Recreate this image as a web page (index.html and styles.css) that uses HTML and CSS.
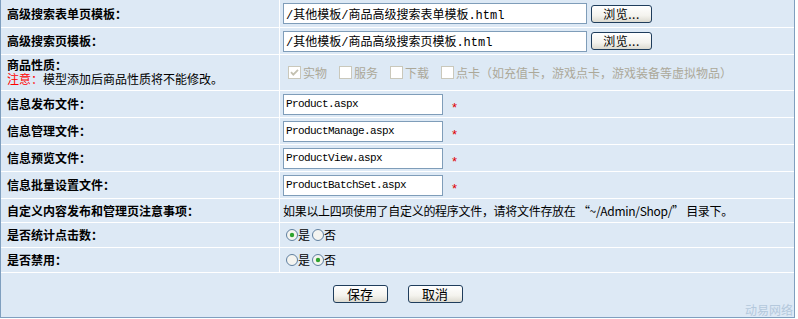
FILE: index.html
```html
<!DOCTYPE html>
<html lang="zh-CN">
<head>
<meta charset="utf-8">
<title>商品模型设置</title>
<link rel="stylesheet" href="styles.css">
</head>
<body>
<div class="panel">
  <div class="label">高级搜索表单页模板：</div>
  <div class="field">
    <input class="txt txt-long" type="text" value="/其他模板/商品高级搜索表单模板.html">
    <button class="btn btn-browse" type="button">浏览...</button>
  </div>

  <div class="label">高级搜索页模板：</div>
  <div class="field">
    <input class="txt txt-long" type="text" value="/其他模板/商品高级搜索页模板.html">
    <button class="btn btn-browse" type="button">浏览...</button>
  </div>

  <div class="label label-stack">
    <span class="line">商品性质：</span>
    <span class="line note"><em>注意：</em>模型添加后商品性质将不能修改。</span>
  </div>
  <div class="field checks">
    <span class="chk">
      <svg class="box" width="13" height="13" viewBox="0 0 13 13"><rect x="0.5" y="0.5" width="12" height="12" fill="#fff" stroke="#cac8bb"/><path d="M3 6.2 L5.3 8.6 L10 3.8" fill="none" stroke="#c3c0b0" stroke-width="1.8"/></svg>
      实物
    </span>
    <span class="chk">
      <svg class="box" width="13" height="13" viewBox="0 0 13 13"><rect x="0.5" y="0.5" width="12" height="12" fill="#fff" stroke="#cac8bb"/></svg>
      服务
    </span>
    <span class="chk">
      <svg class="box" width="13" height="13" viewBox="0 0 13 13"><rect x="0.5" y="0.5" width="12" height="12" fill="#fff" stroke="#cac8bb"/></svg>
      下载
    </span>
    <span class="chk">
      <svg class="box" width="13" height="13" viewBox="0 0 13 13"><rect x="0.5" y="0.5" width="12" height="12" fill="#fff" stroke="#cac8bb"/></svg>
      点卡（如充值卡，游戏点卡，游戏装备等虚拟物品）
    </span>
  </div>

  <div class="label">信息发布文件：</div>
  <div class="field">
    <input class="txt txt-short" type="text" value="Product.aspx">
    <span class="req">*</span>
  </div>

  <div class="label">信息管理文件：</div>
  <div class="field">
    <input class="txt txt-short" type="text" value="ProductManage.aspx">
    <span class="req">*</span>
  </div>

  <div class="label">信息预览文件：</div>
  <div class="field">
    <input class="txt txt-short" type="text" value="ProductView.aspx">
    <span class="req">*</span>
  </div>

  <div class="label">信息批量设置文件：</div>
  <div class="field">
    <input class="txt txt-short" type="text" value="ProductBatchSet.aspx">
    <span class="req">*</span>
  </div>

  <div class="label">自定义内容发布和管理页注意事项：</div>
  <div class="field text">如果以上四项使用了自定义的程序文件，请将文件存放在 “~/Admin/Shop/” 目录下。</div>

  <div class="label">是否统计点击数：</div>
  <div class="field radios">
    <span class="rad">
      <svg width="12" height="12" viewBox="0 0 12 12"><circle cx="6" cy="6" r="5.5" fill="#f4f4f0" stroke="#5f7f9f"/><circle cx="6" cy="6" r="2.2" fill="#2ea32e"/></svg>是
    </span>
    <span class="rad">
      <svg width="12" height="12" viewBox="0 0 12 12"><circle cx="6" cy="6" r="5.5" fill="#f4f4f0" stroke="#5f7f9f"/></svg>否
    </span>
  </div>

  <div class="label">是否禁用：</div>
  <div class="field radios">
    <span class="rad">
      <svg width="12" height="12" viewBox="0 0 12 12"><circle cx="6" cy="6" r="5.5" fill="#f4f4f0" stroke="#5f7f9f"/></svg>是
    </span>
    <span class="rad">
      <svg width="12" height="12" viewBox="0 0 12 12"><circle cx="6" cy="6" r="5.5" fill="#f4f4f0" stroke="#5f7f9f"/><circle cx="6" cy="6" r="2.2" fill="#2ea32e"/></svg>否
    </span>
  </div>

  <div class="actions">
    <button class="btn btn-act" type="button">保存</button>
    <button class="btn btn-act" type="button">取消</button>
    <span class="mark">动易网络</span>
  </div>
</div>
</body>
</html>
```

FILE: styles.css
```css
html, body {
  margin: 0;
  padding: 0;
  background: #ffffff;
}

body {
  font-family: "Noto Sans CJK SC", "Liberation Sans", sans-serif;
  font-size: 12px;
  color: #000;
}

.panel {
  width: 793px;
  display: grid;
  grid-template-columns: 278px 1fr;
  grid-template-rows: 27px 26px 35px 26px 26px 26px 26px 23px 24px 24px 44px;
  gap: 1px;
  background: #ffffff;
  border: 1px solid #7f9fbf;
  border-top: 0;
}

.label,
.field,
.actions {
  background: #dde9f5;
  display: flex;
  align-items: center;
  line-height: 14px;
}

.label {
  padding-left: 6px;
  font-weight: bold;
}

.label-stack {
  flex-direction: column;
  align-items: flex-start;
  justify-content: center;
}

.line {
  display: block;
  font-family: "Liberation Sans", "Noto Sans CJK SC", sans-serif;
  line-height: 14px;
}

.note {
  font-weight: normal;
}

.note em {
  font-style: normal;
  color: #ff0000;
}

.field {
  padding-left: 3px;
}

.txt {
  box-sizing: border-box;
  height: 21px;
  margin: 0;
  padding: 0 2px;
  border: 1px solid #7f9db9;
  background: #fff;
  color: #000;
  font-family: "Liberation Mono", "Noto Sans CJK SC", monospace;
  font-size: 12px;
  outline: none;
}

.txt-long {
  width: 304px;
}

.txt-short {
  width: 160px;
  font-size: 11px;
  letter-spacing: -0.6px;
}

.btn {
  box-sizing: border-box;
  margin: 0;
  padding: 0;
  border: 1px solid #1f3d5c;
  border-radius: 3px;
  background: linear-gradient(#ffffff, #f4f3ee 60%, #dcdad0);
  font-family: "Noto Sans CJK SC", sans-serif;
  font-size: 12px;
  color: #000;
  line-height: 14px;
}

.btn-browse {
  width: 61px;
  height: 18px;
  margin-left: 4px;
  text-align: center;
  letter-spacing: 0.5px;
}

.req {
  color: #e00000;
  font-family: "Liberation Sans", sans-serif;
  font-size: 13px;
  margin-left: 9px;
  padding-top: 7px;
}

.checks {
  padding-left: 8px;
  color: #aca899;
}

.chk {
  display: inline-flex;
  align-items: center;
  margin-right: 12px;
}

.chk .box {
  margin-right: 2px;
}

.text {
  padding-left: 3px;
  letter-spacing: -0.3px;
}

.radios {
  padding-left: 6px;
}

.rad {
  display: inline-flex;
  align-items: center;
  margin-right: 2px;
}

.actions {
  grid-column: 1 / -1;
  position: relative;
  justify-content: center;
  gap: 20px;
  padding-bottom: 2px;
}

.btn-act {
  width: 55px;
  height: 18px;
  font-size: 13px;
}

.mark {
  position: absolute;
  right: 1px;
  bottom: 0;
  color: #b4c8dc;
  font-size: 12px;
  line-height: 14px;
}
```
